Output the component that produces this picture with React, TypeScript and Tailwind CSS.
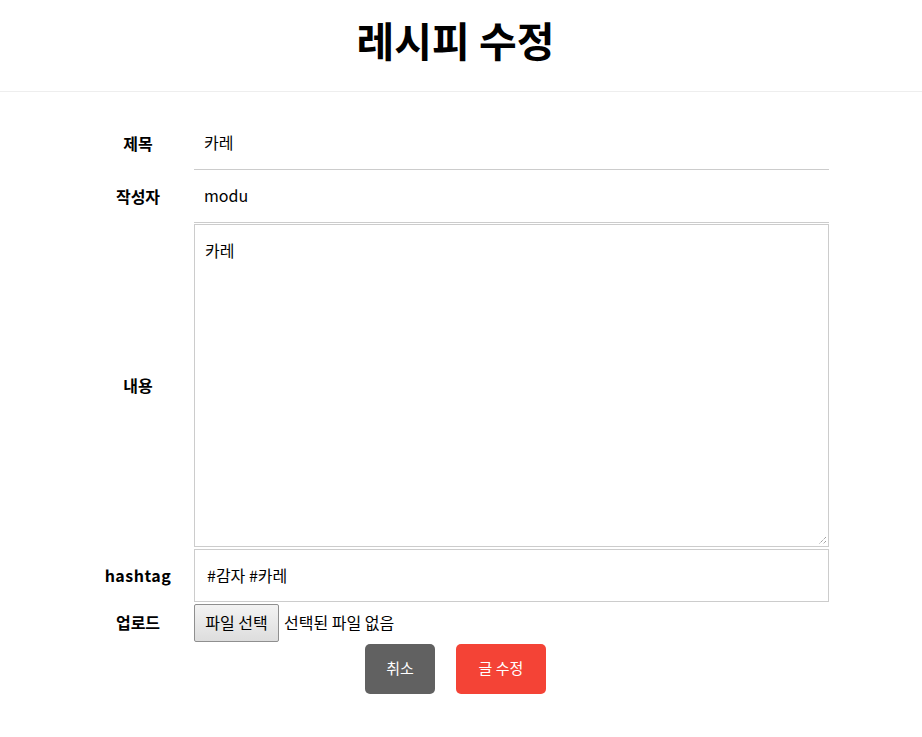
import React from "react";

const ko = { fontFamily: '"Noto Sans CJK KR", "Noto Sans", sans-serif' };

export default function App() {
  return (
    <div className="min-h-[737px] w-full bg-white text-black" style={ko}>
      <header className="flex h-[92px] justify-center border-b border-[#eeeeee] pr-[11px] pt-[17px]">
        <h1 className="text-[41px] font-bold leading-[44px]">레시피 수정</h1>
      </header>
      <div className="mx-auto mt-[27px] w-[736px]">
        <div className="flex flex-col gap-[2px]">
          <div className="flex items-stretch">
            <div className="flex w-[90px] items-center justify-center pb-[3px] text-[16px] font-bold">제목</div>
            <div className="ml-[11px] flex h-[51px] flex-1 items-center border-b border-[#cccccc] pb-[4px] pl-[10px] text-[16px]">카레</div>
          </div>
          <div className="flex items-stretch">
            <div className="flex w-[90px] items-center justify-center pb-[3px] text-[16px] font-bold">작성자</div>
            <div className="ml-[11px] flex h-[51px] flex-1 items-center border-b border-[#cccccc] pb-[4px] pl-[10px] text-[16px]">modu</div>
          </div>
          <div className="-mt-[1px] flex items-stretch">
            <div className="flex w-[90px] items-center justify-center pb-[2px] text-[16px] font-bold">내용</div>
            <div className="relative ml-[11px] h-[323px] flex-1 border border-[#cccccc] px-[10px] pt-[13px] text-[16px]">
              카레
              <svg className="absolute bottom-[1px] right-[1px]" width="10" height="10" viewBox="0 0 10 10">
                <path d="M9 2 L2 9 M9 6 L6 9" stroke="#777" strokeWidth="1" strokeDasharray="1 1" />
              </svg>
            </div>
          </div>
          <div className="flex items-stretch">
            <div className="flex w-[90px] items-center justify-center pb-[2px] text-[16px] font-bold tracking-[0.5px]">hashtag</div>
            <div className="ml-[11px] flex h-[53px] flex-1 items-center border border-[#cccccc] pb-[2px] pl-[12px] text-[16px]">#감자 #카레</div>
          </div>
          <div className="flex items-stretch">
            <div className="flex w-[90px] items-center justify-center pb-[3px] text-[16px] font-bold">업로드</div>
            <div className="ml-[11px] flex h-[38px] flex-1 items-center text-[16px]">
              <div className="flex h-[38px] w-[85px] items-center justify-center rounded-[2px] border border-[#8f8f8f] bg-gradient-to-b from-[#f3f3f3] to-[#dddddd] pb-[3px]">파일 선택</div>
              <span className="ml-[5px] pb-[3px]">선택된 파일 없음</span>
            </div>
          </div>
        </div>
        <div className="mt-[2px] flex justify-center gap-[21px] pr-[11px]">
          <button className="h-[50px] w-[70px] rounded-[5px] bg-[#616161] pb-[2px] text-[15px] text-white">취소</button>
          <button className="h-[50px] w-[90px] rounded-[5px] bg-[#f44336] pb-[2px] text-[15px] text-white">글 수정</button>
        </div>
      </div>
    </div>
  );
}
